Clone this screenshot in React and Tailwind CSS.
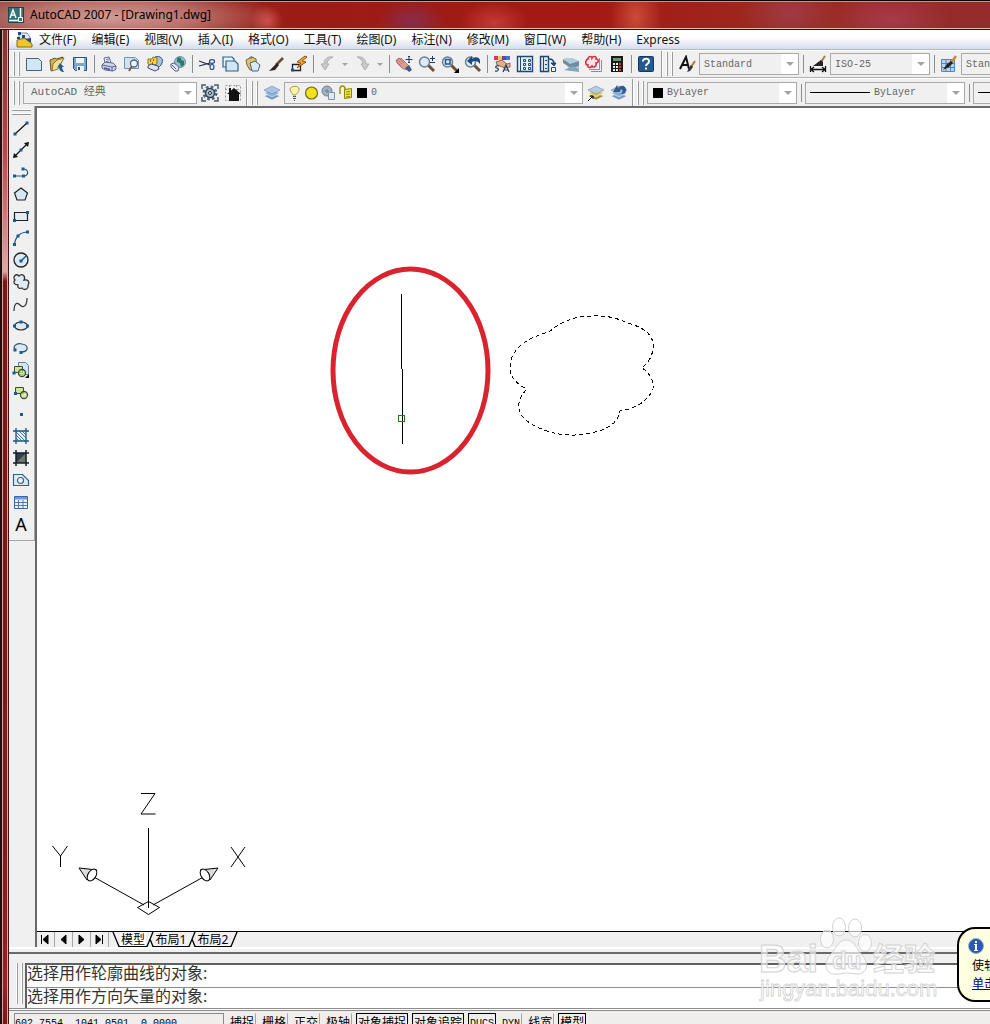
import React, { useState } from "react";

/* ---------- shared icon frame ---------- */

const Icon = ({ children }) => (
  <svg width="18" height="18" viewBox="0 0 18 18" fill="none" aria-hidden="true" className="shrink-0">
    {children}
  </svg>
);

const Printer = () => (
  <g stroke="#4a5688" strokeWidth=".9">
    <path d="M5 8 4 3l5-1 2 6" fill="#fff" />
    <path d="M6 4.500l3-.5M6 6.500l3-.5" />
    <path d="M2 10l3-3 8 1 3 3v3l-3 2-8-1-3-2z" fill="#cfd5ea" />
    <path d="M2 10l10 2 4-1M12 12v4" />
    <path d="M4 13l6 1.500" strokeWidth="1.500" />
  </g>
);

const Globe = () => (
  <>
    <circle cx="11" cy="7" r="5.500" fill="#8fc0d8" stroke="#6a93a8" />
    <path d="M8 3c3-2 5 0 4 2l3 1v4l-3 2-1-4-3-1z" fill="#2f7a5c" />
    <path d="M2 9l3-1 5 4-1 4-3 0-4-4z" fill="#e3e9f3" stroke="#50618c" />
    <path d="M3 10l4 4" stroke="#50618c" />
  </>
);

const Lens = () => (
  <>
    <path d="M10 10l6 6" stroke="#6d5138" strokeWidth="3" />
    <circle cx="6.500" cy="7" r="5" fill="#d9ebf7" stroke="#6f7f8e" strokeWidth="1.500" />
  </>
);

const Brush = () => (
  <>
    <path d="M16 1l-5 7" stroke="#c28a45" strokeWidth="2.5" />
    <path d="M11 6l2 2-4 4-6 3 4-6z" fill="#222" />
  </>
);

const Sheets = ({ top = "#aac4e4", mid = "#8fb0d8", low = "#7594c0" }) => (
  <>
    <path d="M1 12l8-3 8 3-8 4z" fill={low} stroke="#fff" strokeWidth=".5" />
    <path d="M1 9l8-3 8 3-8 4z" fill={mid} stroke="#fff" strokeWidth=".5" />
    <path d="M1 6l8-4 8 4-8 4z" fill={top} stroke="#5d7fae" strokeWidth=".5" />
  </>
);

const HatchFrame = () => <path d="M4 1v16M14 1v16M1 4h16M1 14h16" stroke="#24557f" strokeWidth="1.3" />;

const Node = ({ x, y }) => <rect x={x - 1.5} y={y - 1.5} width="3" height="3" fill="#1c5a91" />;

const icons = {
  new: <path d="M1.5 3.5h12l3 3v9h-15z" fill="#d3e6f5" stroke="#3f6484" />,
  open: (
    <>
      <path d="M2 5l5-2 1 1 7-2-1 4-9 9-2 1z" fill="#c9b25e" stroke="#6d5a1e" />
      <path d="M5 9l4-4 7-2-6 11-6 2z" fill="#f0df98" stroke="#8a7434" />
      <path d="M16 17c-3 0-5-2-5-5l-2 1 3-5 4 4h-2c0 2 1 3 2 5z" fill="#235c88" />
    </>
  ),
  save: (
    <>
      <path d="M2.5 2.5h13v13h-11l-2-2z" fill="#7ba4cf" stroke="#2b4f7a" />
      <path d="M5 3h8v5H5zM6 11h7v5H6z" fill="#eef4fa" />
      <path d="M7 12h2v3H7z" fill="#2b4f7a" />
    </>
  ),
  print: <Printer />,
  preview: (
    <>
      <path d="M1.500 2.500h11l3 3v8h-14z" fill="#cfe2f2" stroke="#6f93b3" />
      <path d="M9 11l-3 5" stroke="#8a5a32" strokeWidth="2" />
      <circle cx="11" cy="8.500" r="3.500" fill="#eaf5fc" stroke="#4a6480" strokeWidth="1.300" />
    </>
  ),
  publish: (
    <>
      <path d="M9 2c5-2 9 2 7 6-1 3-4 5-7 6l1-6z" fill="#a6c3e0" stroke="#33527c" />
      <path d="M2 4l4 0 1-2 4 1v6l-6 2-3-2z" fill="#f5d23e" stroke="#8a7420" />
      <path d="M4 6h1M7 5h1M6 8h1" stroke="#7a4a10" strokeWidth="1.500" />
      <path d="M2 11l3-2 7 2 1 3-4 2-7-3z" fill="#dfe3f1" stroke="#3c4a78" />
    </>
  ),
  web: <Globe />,
  cut: (
    <g stroke="#1f2d42" strokeWidth="1.2">
      <path d="M1 6l11 4M1 11l11-3" />
      <ellipse cx="14" cy="6.500" rx="2.500" ry="1.800" stroke="#2c4c80" />
      <ellipse cx="14" cy="12" rx="2" ry="2.500" stroke="#2c4c80" />
    </g>
  ),
  copy: (
    <g stroke="#2f5f8d" strokeWidth="1.2">
      <path d="M2 2h9l2 2v8H2z" fill="#eaf3fa" />
      <path d="M5 6h9l3 3v7H5z" fill="#d3e6f5" />
    </g>
  ),
  paste: (
    <>
      <path d="M2 5l6-3 4 2 1 11-7 0-3-5z" fill="#e0c868" stroke="#7a672c" />
      <path d="M6 8l5-2 5 4-2 6H8z" fill="#dbe9f5" stroke="#3f6484" />
      <path d="M4 4l3-3 3 2z" fill="#777" />
    </>
  ),
  match: (
    <>
      <path d="M16 3l-7 7" stroke="#6a4a2b" strokeWidth="2.5" />
      <path d="M10 8l2 2-4 5-6 1 4-4z" fill="#2d2420" />
    </>
  ),
  block: (
    <>
      <path d="M2.500 9.500h8v6h-8z" fill="#f4f4f4" stroke="#222" strokeWidth="1.300" />
      <path d="M15 1L7 7l4 1-4 5 9-6-4-1 5-4z" fill="#f2b227" stroke="#9a4a16" />
      <Node x={2.5} y={15} />
    </>
  ),
  undo: <path d="M14 2c-5-1-9 2-9 7H2l4 6 4-6H8c0-3 2-5 6-7z" fill="#c9c9c9" stroke="#b0b0b0" />,
  redo: <path d="M3 2c5-1 9 2 9 7h3l-4 6-4-6h2c0-3-2-5-6-7z" fill="#c9c9c9" stroke="#b0b0b0" />,
  pan: (
    <>
      <path d="M1 5l2 0 0-2 3 1 0-1 8 8-3 4-4-2-5-5z" fill="#dba092" stroke="#a8645a" strokeWidth=".8" />
      <path d="M2 4l5 5M4 3l5 5M1 6l5 5" stroke="#a8645a" strokeWidth=".6" />
      <path d="M10 13l4-3 3 5-3 2z" fill="#44597f" />
      <path d="M14 1v7M10.500 4.500h7M13 2l1-1 1 1M13 7l1 1 1-1" stroke="#203a62" />
    </>
  ),
  zoomrt: (
    <>
      <Lens />
      <path d="M14.500 1v5M12 3.500h5M12 7.500h5" stroke="#1c3a66" />
    </>
  ),
  zoomwin: (
    <>
      <Lens />
      <rect x="4.500" y="4.500" width="4.500" height="4.500" stroke="#27568a" strokeWidth="1.500" />
      <path d="M18 13v5h-5z" fill="#000" />
    </>
  ),
  zoomprev: (
    <>
      <Lens />
      <path d="M3 6l5-5v3c4-3 7-2 8 1v4c-2-3-5-4-8-2v3z" fill="#1d4a80" />
    </>
  ),
  properties: (
    <>
      <path d="M1 1h4v4H1z" fill="#d5347f" />
      <path d="M5 1h4v4H5z" fill="#ead24a" />
      <path d="M9 1h4v4H9z" fill="#6f3fb0" />
      <path d="M13 1h4v4h-4z" fill="#3c7bc1" />
      <path d="M3 7l6-2 5 4 3-1v4l-5 1-8-3z" fill="#dfae8a" stroke="#7a4c36" strokeWidth=".8" />
      <path d="M10 17l3-7 3 7M11 15h4M6 11c-4-1-4 2-2 2s2 4-2 3" stroke="#23395e" strokeWidth="1.200" />
    </>
  ),
  design: (
    <g stroke="#21486f">
      <path d="M1.500 1.500h15v15h-15z" fill="#e4eff8" strokeWidth="1.400" />
      <path d="M4.500 2v14" />
      <path d="M7.500 4.500h2v2h-2zM12.500 4.500h2v2h-2zM7.500 8.500h2v2h-2zM12.500 8.500h2v2h-2zM7.500 12.500h2v2h-2zM12.500 12.500h2v2h-2z" />
    </g>
  ),
  palettes: (
    <g stroke="#21486f">
      <path d="M1.500 1.500h8v15h-8z" fill="#d8e7f4" strokeWidth="1.400" />
      <path d="M4.500 2v14M6 5.500h2M6 9.500h2M6 13.500h2" />
      <path d="M10 4c3 0 5 2 5 5" strokeWidth="1.500" />
      <path d="M12 8h5l-2 3z" fill="#21486f" />
      <path d="M12.500 12.500h4v4h-4z" fill="#fff" />
    </g>
  ),
  sheetset: (
    <>
      <path d="M2 3h9l6 3v10H7z" fill="#b4cbdb" />
      <path d="M1 4l7 5 9-3v5l-8 2-8-5z" fill="#6f8ca2" />
      <path d="M2 15l9-4 6 3v3z" fill="#86a5ba" />
    </>
  ),
  markup: (
    <>
      <path d="M6 16.500h10.500V5M4 14.500h10.500V3" stroke="#8d8d95" />
      <path d="M1.500 1.500h11v11h-11z" fill="#fbe4e6" />
      <path d="M3 4c0-3 4-3 4-1 2-3 5-1 4 1 3 0 3 4 0 4 1 4-3 5-4 3-2 3-5 1-4-1-3 0-3-5 0-6z" stroke="#d22c3d" strokeWidth="1.500" />
    </>
  ),
  calc: (
    <>
      <path d="M3 1h12v16H3z" fill="#1a1a1a" />
      <path d="M5 3h8v3H5z" fill="#5f9a70" />
      <path d="M5 8h2v2H5zM8 8h2v2H8zM5 11h2v2H5zM8 11h2v2H8zM5 14h2v2H5zM8 14h2v2H8z" fill="#eee" />
      <path d="M11 8h2v2h-2zM11 11h2v2h-2zM11 14h2v2h-2z" fill="#d33a3a" />
    </>
  ),
  help: (
    <>
      <rect x="1.500" y="1.500" width="15" height="15" rx="1" fill="#245a8e" stroke="#153a60" />
      <path d="M6 6.500c0-4 6.500-3.500 6 0C12 9 9 8.500 9 11M9 12.500v2" stroke="#fff" strokeWidth="2" />
    </>
  ),
  textstyle: (
    <>
      <path d="M2 14L8 2l3 12M4 10h6" stroke="#111" strokeWidth="2" />
      <path d="M17 6l-4 6" stroke="#b0773a" strokeWidth="2" />
      <path d="M13 10l2 2-3 4-3 1 2-4z" fill="#333" />
    </>
  ),
  dimstyle: (
    <>
      <path d="M16 1l-4 6" stroke="#b0773a" strokeWidth="2" />
      <path d="M12 5l2 2v4H4z" fill="#222" />
      <path d="M1.500 11v6M16.500 11v6M2 14.500h14M5 12l-3 2.500L5 17M13 12l3 2.500-3 2.500" stroke="#111" strokeWidth="1.300" />
    </>
  ),
  tablestyle: (
    <>
      <path d="M1.500 4.500h13v12h-13z" fill="#b9d4ec" stroke="#4d86c0" />
      <path d="M2 8.500h12M2 12.500h12M6 5v11M10.500 5v11" stroke="#4d86c0" />
      <Brush />
    </>
  ),
  gear: (
    <>
      <path d="M1 5V1h4M13 1h4v4M1 13v4h4M17 13v4h-4" stroke="#4a5968" strokeWidth="1.500" />
      <circle cx="9" cy="9" r="6" stroke="#52677c" strokeWidth="3" strokeDasharray="2.600 2.100" />
      <circle cx="9" cy="9" r="4.500" fill="#a8bdcb" stroke="#32465a" strokeWidth="1.500" />
      <circle cx="9" cy="9" r="1.500" fill="#e8eef2" stroke="#243447" />
    </>
  ),
  home: (
    <>
      <path d="M1.500 1.500h15v15h-15zM1 5.500h16M5.500 1v16M12.500 1v16" stroke="#999" strokeDasharray="2 2" />
      <path d="M10 4l7 6h-2v7H5v-7H3zM5 4h2v4H5z" fill="#111" />
    </>
  ),
  layers: <Sheets />,
  layerobj: (
    <>
      <Sheets top="#b7cbe0" mid="#dcc94b" low="#9a8d33" />
      <path d="M1 17l5-5M3 12h3v3" stroke="#000" />
    </>
  ),
  layerprev: (
    <>
      <Sheets />
      <path d="M3 8l4-7 1 3c4-4 8-2 8 2 0 3-2 4-5 4 2-2 2-4 0-5l-1 3z" fill="#2f5a8c" />
    </>
  ),
  line: (
    <>
      <path d="M3 15L15 4" stroke="#111" strokeWidth="1.200" />
      <Node x={3} y={15} />
      <Node x={15} y={4} />
    </>
  ),
  xline: (
    <>
      <path d="M2 16L16 2" stroke="#111" strokeWidth="1.200" />
      <path d="M1 17l1-5 4 4zM17 1l-1 5-4-4z" fill="#111" />
      <Node x={9} y={9} />
    </>
  ),
  pline: (
    <>
      <path d="M3 13h8M11 6c6 0 6 7 1 7" stroke="#24557f" strokeWidth="1.200" />
      <Node x={2.5} y={13} />
      <Node x={11.5} y={13} />
      <Node x={11} y={6} />
    </>
  ),
  polygon: <path d="M9 3l6.500 5-2.500 7H5L2.500 8z" fill="#d7e7f3" stroke="#222" strokeWidth="1.200" />,
  rect: (
    <>
      <path d="M2.500 5.500h13v8h-13z" fill="#e3edf5" stroke="#222" strokeWidth="1.200" />
      <Node x={15.5} y={5.5} />
      <Node x={2.5} y={13.5} />
    </>
  ),
  arc: (
    <>
      <path d="M2.500 16C3 8 8 3 16 3" stroke="#24557f" strokeWidth="1.200" />
      <Node x={2.5} y={15.5} />
      <Node x={6} y={7} />
      <Node x={15.5} y={3} />
    </>
  ),
  circle: (
    <>
      <circle cx="9" cy="9" r="7" fill="#dceaf4" stroke="#222" strokeWidth="1.300" />
      <path d="M9 10l5-5" stroke="#1c5a91" strokeWidth="1.500" />
      <Node x={9} y={10} />
    </>
  ),
  cloud: (
    <path
      d="M3 7C0 4 4 0 7 3c3-3 7 0 5 4 4-1 6 2 4 5 1 4-4 6-6 3-2 1-5 0-4-3-4 0-5-3-3-5z"
      fill="#e0ebf3"
      stroke="#333"
      strokeWidth="1.300"
    />
  ),
  spline: <path d="M2 16c0-6 2-10 6-6 4 4 7 0 7-7" stroke="#333" strokeWidth="1.200" />,
  ellipse: (
    <>
      <ellipse cx="9" cy="9" rx="6.500" ry="4" fill="#dceaf4" stroke="#222" strokeWidth="1.200" />
      <Node x={2.5} y={9} />
      <Node x={15.5} y={9} />
      <Node x={9} y={5} />
    </>
  ),
  earc: (
    <>
      <path d="M3 11C0 6 6 4 10 5c7 1 7 8-1 8" fill="#dceaf4" stroke="#32536e" strokeWidth="1.200" />
      <Node x={3} y={11} />
      <Node x={9} y={13.5} />
    </>
  ),
  insert: (
    <>
      <path d="M6.500 1.500h7l3 3v9h-10z" fill="#d3e6f5" stroke="#5d83a5" />
      <path d="M2.500 5.500h8v6h-8z" fill="#cfe3a0" stroke="#3a5520" />
      <circle cx="10" cy="12" r="3.500" fill="#cfe3a0" fillOpacity=".7" stroke="#3a5520" strokeWidth="1.300" />
      <Node x={2} y={12} />
      <path d="M17 13v4h-4z" fill="#000" />
    </>
  ),
  makeblock: (
    <>
      <path d="M3.500 4.500h8v6h-8z" fill="#cfe3a0" stroke="#3a5520" />
      <circle cx="12" cy="12" r="3.500" fill="#cfe3a0" fillOpacity=".7" stroke="#3a5520" strokeWidth="1.300" />
      <Node x={3.5} y={10.5} />
    </>
  ),
  point: <Node x={9.5} y={9.5} />,
  hatch: (
    <>
      <path d="M4 4h10v10H4z" fill="#e6f0f8" />
      <path d="M4 11l3 3M4 8l6 6M4 5l9 9M7 4l7 7M10 4l4 4" stroke="#3d78a8" />
      <HatchFrame />
    </>
  ),
  gradient: (
    <>
      <path d="M4 4h10v10H4z" fill="#6b776b" />
      <path d="M4 14V4h10z" fill="#343e46" />
      <path d="M4 1v16M14 1v16M1 4h16M1 14h16" stroke="#161d28" strokeWidth="1.500" />
    </>
  ),
  region: (
    <>
      <path d="M1.500 3.500h9l6 6v5h-15z" fill="#dceaf4" stroke="#34618a" strokeWidth="1.200" />
      <circle cx="8.500" cy="9.500" r="3" fill="#f4f9fc" stroke="#34618a" strokeWidth="1.200" />
    </>
  ),
  table: (
    <>
      <path d="M2.500 3.500h13v12h-13z" fill="#eaf2fa" stroke="#3566a8" />
      <path d="M3 4h12v2.500H3z" fill="#6f9bd0" />
      <path d="M3 9.500h12M3 12.500h12M6.500 7v8M11 7v8" stroke="#4d7ab5" />
    </>
  ),
};

/* ---------- data ---------- */

const menus = [
  "文件(F)", "编辑(E)", "视图(V)", "插入(I)", "格式(O)", "工具(T)",
  "绘图(D)", "标注(N)", "修改(M)", "窗口(W)", "帮助(H)", "Express",
];

const standardTools = [
  "new", "open", "save", "|", "print", "preview", "publish", "web", "|",
  "cut", "copy", "paste", "match", "block", "|", "undo", "v", "redo", "v", "|",
  "pan", "zoomrt", "zoomwin", "zoomprev", "|",
  "properties", "design", "palettes", "sheetset", "markup", "calc", "|", "help",
];

const drawTools = [
  "line", "xline", "pline", "polygon", "rect", "arc", "circle", "cloud", "spline",
  "ellipse", "earc", "insert", "makeblock", "point", "hatch", "gradient", "region", "table",
];

const modes = [
  { label: "捕捉" },
  { label: "栅格" },
  { label: "正交" },
  { label: "极轴" },
  { label: "对象捕捉", on: true },
  { label: "对象追踪", on: true },
  { label: "DUCS", on: true },
  { label: "DYN" },
  { label: "线宽" },
  { label: "模型", on: true },
];

/* ---------- toolbar pieces ---------- */

const ToolButton = ({ name }) => (
  <button type="button" aria-label={name} className="flex h-[22px] w-[23px] shrink-0 items-center justify-center hover:bg-sky-100">
    <Icon>{icons[name]}</Icon>
  </button>
);

const Separator = () => (
  <div className="flex w-[6px] shrink-0 justify-center">
    <div className="h-[18px] w-px bg-[#8c8c8c]" />
  </div>
);

const Arrow = () => (
  <svg width="8" height="4" viewBox="0 0 8 4" aria-hidden="true">
    <path d="M0 0h8L4 4z" fill="#a3a3a3" />
  </svg>
);

const Grip = () => (
  <div className="flex w-3 shrink-0 items-center gap-[3px] pl-[3px]">
    <div className="h-6 w-[2px] border-r border-[#9a9a9a] bg-white" />
    <div className="h-6 w-[2px] border-r border-[#9a9a9a] bg-white" />
  </div>
);

const Toolbar = ({ pad = "pr-[2px]", children }) => (
  <div className={`flex shrink-0 items-center border-l border-r border-l-white border-r-[#9a9a9a] ${pad}`}>
    <Grip />
    {children}
  </div>
);

const Combo = ({ label, value, width, text = "text-[10px]", children }) => (
  <div className={`mx-px flex h-[22px] shrink-0 items-center border border-[#a9a9a9] bg-[#f0f0f0] ${width}`}>
    {children}
    <div className="relative flex h-full min-w-0 flex-1 items-center">
      <select
        aria-label={label}
        defaultValue={value}
        className={`h-full w-full appearance-none bg-transparent pl-1 text-[#666] outline-none font-['Liberation_Mono','Noto_Sans_CJK_SC',monospace] ${text}`}
      >
        <option>{value}</option>
      </select>
      <div className="pointer-events-none absolute inset-y-0 right-0 flex w-[17px] items-center justify-center bg-white">
        <Arrow />
      </div>
    </div>
  </div>
);

const Swatch = () => <span className="h-[10px] w-[10px] shrink-0 bg-black" />;

const Toolbars = () => (
  <div className="shrink-0 overflow-hidden bg-[#f0f0f0]">
    <div className="flex h-7 border-t border-b border-t-white border-b-[#b0b0b0]">
      <Toolbar pad="pr-1">
        {standardTools.map((t, i) => {
          if (t === "|") return <Separator key={i} />;
          if (t === "v")
            return (
              <button key={i} type="button" aria-label="history" className="flex h-[22px] w-3 shrink-0 items-center justify-center">
                <svg width="6" height="3" viewBox="0 0 6 3">
                  <path d="M0 0h6L3 3z" fill="#a3a3a3" />
                </svg>
              </button>
            );
          return <ToolButton key={i} name={t} />;
        })}
      </Toolbar>
      <Toolbar>
        <ToolButton name="textstyle" />
        <Combo label="文字样式" value="Standard" width="w-[100px]" />
        <Separator />
        <ToolButton name="dimstyle" />
        <Combo label="标注样式" value="ISO-25" width="w-[100px]" />
        <Separator />
        <ToolButton name="tablestyle" />
        <Combo label="表格样式" value="Standard" width="w-[100px]" />
      </Toolbar>
    </div>
    <div className="flex h-7 border-t border-t-white">
      <Toolbar>
        <Combo label="工作空间" value="AutoCAD 经典" width="w-[174px]" text="text-[11px] pl-[7px]" />
        <ToolButton name="gear" />
        <ToolButton name="home" />
      </Toolbar>
      <Toolbar>
        <ToolButton name="layers" />
        <Combo label="图层" value="0" width="w-[299px]">
          <svg width="70" height="18" viewBox="0 0 70 18" fill="none" className="ml-[2px] shrink-0" aria-hidden="true">
            <path d="M6 11c0-2-3-3-3-6s9-4 9 0-3 4-3 6z" fill="#fdf6a8" stroke="#a89a3c" />
            <path d="M6 12.500h3M6 14.500h3M7 16.500h1" stroke="#555" />
            <circle cx="24.500" cy="9" r="6" fill="#f2e21c" stroke="#6e6a20" strokeWidth="1.200" />
            <circle cx="40" cy="7" r="5" fill="#9fb3c2" stroke="#6b8294" />
            <path d="M38 7h4M40 5v4" stroke="#6b8294" />
            <path d="M41.500 8.500h6v7h-6z" fill="#dfe9f0" stroke="#7b94a6" />
            <path d="M53 10V5c0-4 5-4 5 0v3" stroke="#9a9a00" strokeWidth="1.500" />
            <path d="M57.500 5.500l7-1v9l-7 1z" fill="#f0e64a" stroke="#8a8400" />
            <path d="M59 8l4-.5M59 10.500l4-.5M59 13l4-.5" stroke="#8a8400" />
          </svg>
          <Swatch />
        </Combo>
        <ToolButton name="layerobj" />
        <ToolButton name="layerprev" />
      </Toolbar>
      <Toolbar>
        <Combo label="颜色" value="ByLayer" width="w-[150px]">
          <span className="w-[5px] shrink-0" />
          <Swatch />
        </Combo>
        <Separator />
        <Combo label="线型" value="ByLayer" width="w-[160px]">
          <span className="ml-1 h-px w-[60px] shrink-0 bg-black" />
        </Combo>
        <Separator />
        <Combo label="线宽" value="ByLayer" width="w-[160px]">
          <span className="ml-1 h-px w-[60px] shrink-0 bg-black" />
        </Combo>
      </Toolbar>
    </div>
  </div>
);

/* ---------- drawing area ---------- */

const Palette = () => (
  <div className="w-[26px] shrink-0 bg-[#f0f0f0]">
    <div className="border-r border-b border-[#a5a5a5] pb-[5px]">
      <div className="flex h-[11px] flex-col gap-[2px] px-[3px] pt-[3px]">
        <div className="h-[2px] border-b border-[#9a9a9a] bg-white" />
        <div className="h-[2px] border-b border-[#9a9a9a] bg-white" />
      </div>
      {drawTools.map((t) => (
        <button key={t} type="button" aria-label={t} className="flex h-[22px] w-6 items-center justify-center hover:bg-sky-100">
          <Icon>{icons[t]}</Icon>
        </button>
      ))}
      <button type="button" className="flex h-[22px] w-6 items-center justify-center font-['Noto_Sans',sans-serif] text-[18px] leading-none text-black">
        A
      </button>
    </div>
  </div>
);

const Model = () => (
  <svg className="block h-full w-full" fill="none" aria-label="model space">
    <ellipse cx="373.500" cy="262.500" rx="77.500" ry="101.500" stroke="#d9232e" strokeWidth="5" />
    <path d="M364.500 186v75M365.500 261v75" stroke="#000" />
    <rect x="361.500" y="307.500" width="6" height="6" stroke="#1e7a1e" />
    <path
      d="M512 224Q530 208 555 208Q575 207 590 215Q618 222 616 240Q615 252 605 260Q617 268 616 281Q608 299 583 303Q581 316 565 322Q538 331 513 324Q482 314 482 299Q481 290 490 281Q473 273 473 259Q474 234 512 224z"
      stroke="#000"
      strokeDasharray="4 3"
      shapeRendering="crispEdges"
    />
  </svg>
);

const UcsIcon = () => (
  <svg width="200" height="132" viewBox="0 0 200 132" fill="none" stroke="#000" className="absolute bottom-[11px] left-[13px]" aria-label="UCS">
    <path d="M91 5.500h14L91 26h14.500" />
    <path d="M98.500 40v80" />
    <path d="M87.500 119.500l11-6 11 6-11 7z" />
    <path d="M94 117L42 88M103 117l54-30" />
    <path d="M2.500 58l8 10 7-10M10.500 68v11M181 59l14 20M195 59l-14 20" />
    <path d="M29 80l18 2-10 10z" fill="#ddd" />
    <ellipse cx="42" cy="87" rx="4" ry="6.500" transform="rotate(32 42 87)" fill="#fff" />
    <path d="M168 80l-18 2 10 10z" fill="#ddd" />
    <ellipse cx="155" cy="87" rx="4" ry="6.500" transform="rotate(-32 155 87)" fill="#fff" />
  </svg>
);

const navGlyphs = [
  "M4.500 3v9M11 3v9L6 7.500z",
  "M11 3v9L6 7.500z",
  "M6 3v9l5-4.500z",
  "M5 3v9l5-4.500zM11.500 3v9",
];

const Slant = ({ d, w = 8 }) => (
  <svg width={w} height="15" viewBox={`0 0 ${w} 15`} fill="none" stroke="#000" strokeWidth="1.300" className="shrink-0">
    <path d={d} />
  </svg>
);

const LayoutTabs = () => {
  const tab = "h-[15px] shrink-0 border-b border-black text-center text-[12px] leading-[13px] text-black";
  return (
    <div className="flex h-[15px] shrink-0 overflow-hidden bg-[#f0f0f0]">
      {navGlyphs.map((d) => (
        <button key={d} type="button" aria-label="scroll tabs" className="w-[18px] shrink-0 border-r border-[#a5a5a5]">
          <svg width="17" height="15" viewBox="0 0 17 15" fill="#000" stroke="#000">
            <path d={d} />
          </svg>
        </button>
      ))}
      <div className="w-[3px] shrink-0" />
      <Slant d="M1 0l6 14.500h1" />
      <button type="button" className={`${tab} w-[26px] bg-white`}>模型</button>
      <Slant d="M0 14.500h1L7 0M4 7l3 7.500h1" />
      <button type="button" className={`${tab} w-[34px]`}>布局1</button>
      <Slant d="M0 14.500h1L7 0M4 7l3 7.500h1" />
      <button type="button" className={`${tab} w-[34px]`}>布局2</button>
      <Slant d="M0 14.500h1L7 0" />
    </div>
  );
};

/* ---------- bottom ---------- */

const CommandLine = () => {
  const [command, setCommand] = useState("");
  return (
    <div className="flex shrink-0 border-b border-[#8c8c8c] bg-[#f0f0f0] pt-[9px]">
      <div className="flex w-4 shrink-0 gap-[3px] pb-1 pl-[7px]">
        <div className="w-[2px] border-r border-[#9a9a9a] bg-white" />
        <div className="w-[2px] border-r border-[#9a9a9a] bg-white" />
      </div>
      <div className="min-w-0 flex-1 border-t-2 border-l-2 border-[#606060] bg-white text-[16px] text-[#333]">
        <p className="h-[23px] border-b border-[#8c8c8c] leading-4">选择用作轮廓曲线的对象:</p>
        <div className="flex h-5">
          <label htmlFor="command" className="shrink-0 leading-4">选择用作方向矢量的对象:</label>
          <input
            id="command"
            type="text"
            value={command}
            onChange={(e) => setCommand(e.target.value)}
            className="h-full min-w-0 flex-1 bg-transparent px-1 outline-none"
          />
        </div>
      </div>
    </div>
  );
};

const StatusBar = () => (
  <div className="flex h-6 shrink-0 gap-1 bg-[#f0eeec] pt-[2px] pl-[5px] font-['Liberation_Mono','Noto_Sans_CJK_SC',monospace] text-[12px] text-black">
    <div className="h-5 w-[210px] shrink-0 border-t border-r border-l border-[#8c8c8c] text-[10px] leading-5 whitespace-nowrap">
      602.7554, 1041.0501, 0.0000
    </div>
    {modes.map((m) => (
      <button
        key={m.label}
        type="button"
        aria-pressed={!!m.on}
        className={`h-5 shrink-0 border px-px leading-5 whitespace-nowrap ${
          m.label.startsWith("D") ? "text-[10px]" : "text-[12px]"
        } ${m.on ? "border-black" : "border-transparent border-r-[#a5a5a5]"}`}
      >
        {m.label}
      </button>
    ))}
  </div>
);

const Balloon = () => (
  <div className="absolute right-0 bottom-[22px] h-[75px] w-[33px] overflow-hidden rounded-l-[18px] border-2 border-r-0 border-black bg-[#ffffe1] pt-[9px] pl-[9px] text-[12px] whitespace-nowrap">
    <div className="flex w-[240px] flex-col pl-1">
      <svg width="16" height="16" viewBox="0 0 16 16" className="-ml-1" aria-hidden="true">
        <circle cx="8" cy="8" r="7.500" fill="#2b57b5" stroke="#9aabc9" />
        <path d="M7 3h2v2H7zM6 6h3v6h1v1H6v-1h1V7H6z" fill="#fff" />
      </svg>
      <span className="mt-[3px] leading-[18px] text-black">使软件运行</span>
      <a href="#info" className="leading-[18px] text-[#00009c] underline">单击此处</a>
    </div>
  </div>
);

const Watermark = () => (
  <svg
    width="190"
    height="92"
    viewBox="0 0 190 92"
    className="pointer-events-none absolute right-[45px] bottom-[20px]"
    fill="#fff"
    fillOpacity=".65"
    stroke="#d2d2d2"
    fontFamily="'Liberation Sans','Noto Sans CJK SC',sans-serif"
  >
    <ellipse cx="72" cy="27" rx="6.500" ry="9" />
    <ellipse cx="84" cy="15" rx="6.500" ry="9" />
    <ellipse cx="100" cy="16" rx="6.500" ry="9" />
    <ellipse cx="110" cy="31" rx="6.500" ry="8.500" />
    <path d="M91 28c9 0 10 9 16 15s7 18-4 19c-5 0-8-1-12-1s-7 2-13 1c-10-2-8-14-2-20 5-5 7-14 15-14z" />
    <text x="4" y="60" fontSize="38" fontWeight="700">Bai</text>
    <text x="77" y="57" fontSize="24" fontWeight="700">du</text>
    <text x="118" y="58" fontSize="31" fontWeight="700">经验</text>
    <text x="5" y="84" fontSize="22" strokeWidth=".8">jingyan.baidu.com</text>
  </svg>
);

/* ---------- window ---------- */

const TitleBar = () => (
  <div className="flex h-[30px] shrink-0 items-center gap-[5px] border-t border-b border-t-black border-b-[#3a0c0c] pl-2 text-[12px] text-black shadow-[inset_0_1px_#d98d88,inset_0_-1px_#e8b5b0] bg-[radial-gradient(ellipse_170px_30px_at_110px_16px,#d6a39eee,#c07a74dd_50%,transparent),radial-gradient(circle_at_267px_20px,#cf4a48,transparent_16px),radial-gradient(ellipse_34px_22px_at_412px_20px,#8a2c4a,transparent),radial-gradient(ellipse_34px_22px_at_494px_22px,#c43a34,transparent),radial-gradient(ellipse_26px_40px_at_636px_16px,#cc4a36,transparent),radial-gradient(ellipse_50px_30px_at_790px_12px,#a03a44,transparent),radial-gradient(ellipse_60px_30px_at_890px_18px,#a8394a,transparent),linear-gradient(90deg,#8a3a34,#9b1c15_30%,#a31a14_60%,#9c2a20_80%,#932c2c)]">
    <svg width="17" height="17" viewBox="0 0 17 17" fill="none" aria-hidden="true">
      <path d="M.500.500h15v15H.500z" fill="#2f7474" stroke="#174646" />
      <path d="M2 11l3-8 3 8M3 8h4M1 13.500h9M12.500 1v9" stroke="#fff" strokeWidth="1.400" />
      <path d="M10.500 10.500h4v4h-4z" fill="#2f7474" stroke="#fff" />
    </svg>
    <span>AutoCAD 2007 - [Drawing1.dwg]</span>
  </div>
);

const MenuBar = () => (
  <nav className="flex h-5 shrink-0 items-center gap-[15px] overflow-hidden border-b border-[#b4b9c6] bg-linear-to-b from-white from-40% to-[#d5dcee] pl-[7px] text-[12px] text-[#111] whitespace-nowrap">
    <svg width="17" height="17" viewBox="0 0 17 17" className="-mr-[9px] shrink-0" aria-hidden="true">
      <path d="M3 2h8l3 4v9H3z" fill="#dce8f6" stroke="#7a8eb0" />
      <path d="M1 9l8-2 7 6v3H1z" fill="#f0c52c" stroke="#8d6b12" />
      <path d="M2 1h3v3H2zM6 4h3v3H6zM1 6h3v2H1z" fill="#1f4e86" />
      <path d="M9 8l6-1v5z" fill="#274b7c" />
    </svg>
    {menus.map((m) => (
      <button key={m} type="button" className="shrink-0">
        {m}
      </button>
    ))}
  </nav>
);

export default function App() {
  return (
    <div className="relative h-screen overflow-hidden bg-[#f0f0f0] font-['Noto_Sans','Noto_Sans_CJK_SC',sans-serif]">
      <div className="flex h-[calc(100vh+11px)] flex-col">
        <TitleBar />
        <div className="flex min-h-0 flex-1">
          {/* left window border */}
          <div className="w-[9px] shrink-0 border-l-2 border-r border-l-[#1d0f0c] border-r-[#4a1010] bg-[linear-gradient(#7c3331,#b5474d_12%,#dfa6a6_24%,#7a1a18_25%,#7a1c18_80%,#9b1f28_95%,#6e1614)]">
            <div className="h-full border-x border-[#d9a5a0]" />
          </div>

          <div className="flex min-w-0 flex-1 flex-col">
            <MenuBar />
            <Toolbars />

            <div className="flex min-h-0 flex-1">
              <Palette />
              <div className="flex min-w-0 flex-1 flex-col border-t-2 border-l-2 border-[#6a6a6a]">
                <div className="relative min-h-0 flex-1 border-b border-black bg-white">
                  <Model />
                  <UcsIcon />
                </div>
                <LayoutTabs />
              </div>
            </div>

            <div className="h-[7px] shrink-0 border-t-2 border-b-2 border-t-white border-b-[#6a6a6a]" />
            <CommandLine />
            <div className="h-[2px] shrink-0 border-b border-[#8c8c8c] bg-white" />
            <StatusBar />
          </div>
        </div>
      </div>
      <Watermark />
      <Balloon />
    </div>
  );
}
